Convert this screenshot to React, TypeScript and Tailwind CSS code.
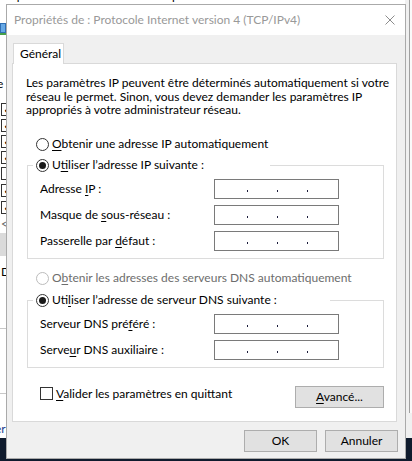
import React from 'react';

function Key({ children }: { children: React.ReactNode }) {
  return <span className="underline decoration-[1px] underline-offset-[2px]">{children}</span>;
}

function Radio({
  checked = false,
  disabled = false,
  className = '',
  children,
}: {
  checked?: boolean;
  disabled?: boolean;
  className?: string;
  children: React.ReactNode;
}) {
  return (
    <div className={`relative flex h-[16px] items-center gap-[3px] bg-white pl-[3px] ${className}`}>
      <span
        className={`flex h-[13px] w-[13px] shrink-0 items-center justify-center rounded-full border bg-white ${
          disabled ? 'border-[#bcbcbc]' : 'border-[#333333]'
        }`}
      >
        {checked && <span className="h-[7px] w-[7px] rounded-full bg-[#1a1a1a]" />}
      </span>
      <span className={`whitespace-nowrap ${disabled ? 'text-[#6d6d6d]' : 'text-black'}`}>{children}</span>
    </div>
  );
}

function IpField() {
  return (
    <div className="flex h-[20px] w-[125px] items-start border border-[#7a7a7a] bg-white pt-[10px]">
      <span className="w-[32px]" />
      <span className="h-[2px] w-[1px] bg-[#1b1b3a]" />
      <span className="w-[29px]" />
      <span className="h-[2px] w-[1px] bg-[#1b1b3a]" />
      <span className="w-[29px]" />
      <span className="h-[2px] w-[1px] bg-[#1b1b3a]" />
    </div>
  );
}

function FieldRow({ label }: { label: React.ReactNode }) {
  return (
    <div className="flex h-[20px] items-center">
      <span className="w-[174px] whitespace-nowrap">{label}</span>
      <IpField />
    </div>
  );
}

function Button({ className = '', children }: { className?: string; children: React.ReactNode }) {
  return (
    <div
      className={`flex h-[22px] items-center justify-center border border-[#adadad] bg-[#e1e1e1] text-black ${className}`}
    >
      {children}
    </div>
  );
}

function BackWindow() {
  const boxes = [103, 119, 135, 151, 167, 184, 201];
  return (
    <>
      {/* window behind the dialog */}
      <div className="absolute left-0 top-[-12px] whitespace-nowrap text-black">
        omposants suivants sont utilisés par cette connexion :
      </div>
      <div className="absolute left-0 top-[23px] h-[10px] w-[6px] border border-[#2f6fb5] bg-[#67a9e6]" />
      <div className="absolute left-0 top-[33px] h-[2px] w-[6px] bg-[#46a048]" />
      <div className="absolute left-[-3px] top-[76px] text-black">e</div>
      {boxes.map((top, i) => (
        <div
          key={top}
          className="absolute left-[1px] flex h-[13px] w-[13px] items-center justify-center border border-[#333333] bg-white text-[9px] leading-none text-black"
          style={{ top }}
        >
          {i === 4 ? '' : '✔'}
        </div>
      ))}
      <div className="absolute left-[1px] top-[216px] text-[11px] text-[#606060]">&lt;</div>
      <div className="absolute left-0 top-[233px] h-[23px] w-[6px] bg-[#dadada]" />
      <div className="absolute left-[1px] top-[264px] text-black">D</div>
      <div className="absolute left-0 top-[328px] h-[1px] w-[6px] bg-[#c8c8c8]" />
      <div className="absolute left-0 top-[393px] h-[1px] w-[6px] bg-[#c8c8c8]" />
      <div className="absolute left-[-5px] top-[421px] text-[#1a3d8f]">er</div>
      <div className="absolute left-[405px] top-0 h-[438px] w-[7px] bg-[#f0f0f0]" />
      <div className="absolute left-[409px] top-0 h-[413px] w-[1px] bg-[#a0a0a0]" />
      <div className="absolute left-[410px] top-0 h-[413px] w-[2px] bg-[#fafafa]" />
      <div className="absolute bottom-0 left-0 h-[23px] w-full bg-[#0f1b2d]" />
    </>
  );
}

export default function App() {
  return (
    <div className="relative h-[461px] w-[412px] overflow-hidden bg-white font-['Lato',sans-serif] text-[12px] leading-[16px] text-black">
      <BackWindow />

      <div className="absolute left-[6px] top-[4px] flex h-[455px] w-[400px] flex-col border border-[#aaaaaa] bg-[#f0f0f0]">
        <div className="flex h-[30px] shrink-0 items-center justify-between bg-white pl-[7px] pr-[10px]">
          <span className="whitespace-nowrap text-[#999999]">Propriétés de : Protocole Internet version 4 (TCP/IPv4)</span>
          <svg width="10" height="10" viewBox="0 0 10 10">
            <path d="M0.5 0.5 L9.5 9.5 M9.5 0.5 L0.5 9.5" stroke="#8c8c8c" strokeWidth="1" fill="none" />
          </svg>
        </div>

        <div className="flex flex-1 flex-col pl-[5px] pr-[8px] pt-[8px]">
          <div className="relative z-10 -mb-[1px] ml-[1px] flex h-[21px] w-[51px] shrink-0 items-center border border-b-0 border-[#d9d9d9] bg-white pb-[1px] pl-[6px]">
            Général
          </div>

          <div className="flex h-[359px] shrink-0 flex-col border border-[#d9d9d9] bg-white">
            <p className="h-[53px] shrink-0 whitespace-nowrap pl-[13px] pt-[12px] leading-[13.5px]">
              Les paramètres IP peuvent être déterminés automatiquement si votre
              <br />
              réseau le permet. Sinon, vous devez demander les paramètres IP
              <br />
              appropriés à votre administrateur réseau.
            </p>

            <Radio className="ml-[20px] mt-[19px] self-start">
              <Key>O</Key>btenir une adresse IP automatiquement
            </Radio>

            <div className="ml-[14px] mr-[12px] mt-[13px] flex flex-col border border-[#dcdcdc] pb-[7px] pl-[12px]">
              <Radio checked className="-ml-[7px] -mt-[9px] w-[237px]">
                U<Key>t</Key>iliser l’adresse IP suivante :
              </Radio>
              <div className="mt-[6px] flex flex-col gap-[6px]">
                <FieldRow label={<>Adresse <Key>I</Key>P :</>} />
                <FieldRow label={<>Masque de <Key>s</Key>ous-réseau :</>} />
                <FieldRow label={<>Passerelle par <Key>d</Key>éfaut :</>} />
              </div>
            </div>

            <Radio disabled className="ml-[20px] mt-[11px] self-start">
              O<Key>b</Key>tenir les adresses des serveurs DNS automatiquement
            </Radio>

            <div className="ml-[14px] mr-[12px] mt-[14px] flex flex-col border border-[#dcdcdc] pb-[7px] pl-[12px]">
              <Radio checked className="-ml-[7px] -mt-[9px] w-[297px]">
                Uti<Key>l</Key>iser l’adresse de serveur DNS suivante :
              </Radio>
              <div className="mt-[6px] flex flex-col gap-[6px]">
                <FieldRow label={<>Serveur DNS pré<Key>f</Key>éré :</>} />
                <FieldRow label={<>Serve<Key>u</Key>r DNS auxiliaire :</>} />
              </div>
            </div>

            <div className="ml-[27px] mr-[12px] mt-[18px] flex items-start justify-between">
              <div className="mt-[1px] flex h-[13px] items-center gap-[3px]">
                <span className="h-[13px] w-[13px] border border-[#333333] bg-white" />
                <span className="whitespace-nowrap">
                  <Key>V</Key>alider les paramètres en quittant
                </span>
              </div>
              <Button className="w-[89px]">
                <span>
                  <Key>A</Key>vancé...
                </span>
              </Button>
            </div>
          </div>

          <div className="-mr-[1px] mt-[8px] flex justify-end gap-[8px]">
            <Button className="w-[73px]">OK</Button>
            <Button className="w-[73px]">Annuler</Button>
          </div>
        </div>
      </div>
    </div>
  );
}
